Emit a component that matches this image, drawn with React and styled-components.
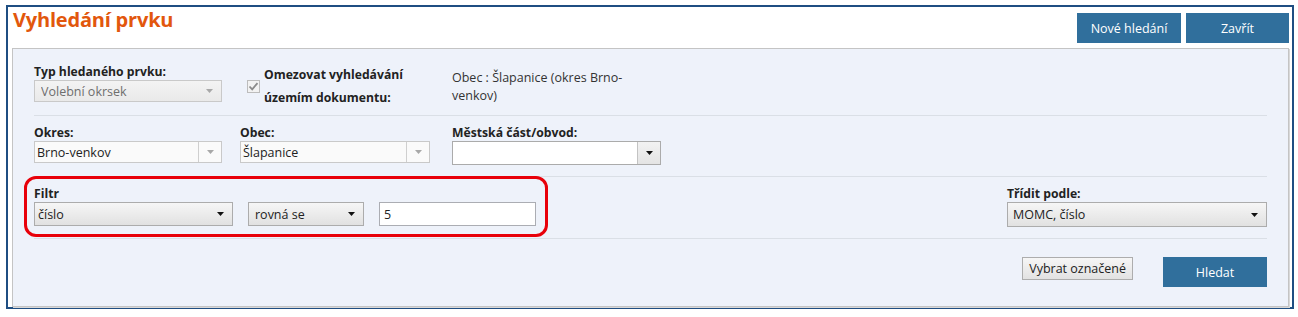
import React from 'react';
import styled, { createGlobalStyle, css } from 'styled-components';

const GlobalStyle = createGlobalStyle`
  body {
    margin: 0;
    background: #fff;
    font-family: "Open Sans", "Noto Sans", sans-serif;
    font-size: 12.5px;
    color: #222;
  }
`;

const Frame = styled.div`
  margin: 5px 4px 0 6px;
  border: 2px solid #1f4e82;
  padding: 0 3px 4px 4px;
  height: 304px;
  box-sizing: border-box;
`;

const Header = styled.div`
  display: flex;
  justify-content: space-between;
  align-items: flex-start;
  padding: 0 0 5px 1px;
`;

const Title = styled.h1`
  margin: 0;
  font-size: 20px;
  line-height: 26px;
  font-weight: 700;
  color: #e2570d;
  letter-spacing: -0.2px;
`;

const ButtonGroup = styled.div`
  display: flex;
  gap: 5px;
  margin-top: 6px;
`;

const BlueButton = styled.button`
  width: ${(p) => p.$w}px;
  height: 30px;
  border: none;
  background: #306f9c;
  color: #fff;
  font-family: inherit;
  font-size: 12.5px;
  padding: 0;
  cursor: pointer;
`;

const GrayButton = styled.button`
  height: 23px;
  padding: 0 6px;
  border: 1px solid #adadad;
  background: linear-gradient(#f6f6f6, #e2e2e2);
  color: #222;
  font-family: inherit;
  font-size: 12.5px;
  cursor: pointer;
`;

const Panel = styled.div`
  background: #eef2fa;
  border: 1px solid #c4c4c4;
  box-shadow: 1px 1px 0 #d8d8d8;
  padding: 0 21px;
  height: 259px;
  box-sizing: border-box;
`;

const Row = styled.div`
  display: flex;
  align-items: flex-start;
  padding: ${(p) => p.$pad};
  border-bottom: ${(p) => (p.$last ? 'none' : '1px solid #dadfe6')};
  justify-content: ${(p) => (p.$end ? 'flex-end' : 'flex-start')};
  gap: ${(p) => p.$gap || 0}px;
`;

const Field = styled.div`
  width: ${(p) => (p.$w ? `${p.$w}px` : 'auto')};
  flex-shrink: 0;
  position: relative;
  margin-left: ${(p) => (p.$push ? 'auto' : '0')};
`;

const Label = styled.div`
  font-weight: 700;
  font-size: 12.2px;
  line-height: 15px;
  margin-bottom: 1px;
  color: #222;
  white-space: nowrap;
`;

const selectLook = {
  disabled: css`
    background: linear-gradient(#f3f3f3, #e9e9e9);
    border-color: #c9c9c9;
    color: #6e6e6e;
    padding-left: 6px;
  `,
  locked: css`
    background: #fafafa;
    border-color: #c9c9c9;
    color: #222;
    padding-left: 2px;
  `,
  combo: css`
    background: #fff;
    border-color: #ababab;
    color: #222;
    padding-left: 2px;
  `,
  drop: css`
    background: linear-gradient(#f6f6f6, #e1e1e1);
    border-color: #acacac;
    color: #222;
    padding-left: ${(p) => p.$pl ?? 5}px;
  `,
};

const Select = styled.div`
  width: ${(p) => p.$w}px;
  height: ${(p) => p.$h || 22}px;
  box-sizing: border-box;
  border: 1px solid;
  display: flex;
  align-items: center;
  ${(p) => selectLook[p.$look]}
`;

const SelectText = styled.span`
  flex: 1;
  white-space: nowrap;
  overflow: hidden;
`;

const ArrowBox = styled.span`
  width: 23px;
  align-self: stretch;
  display: flex;
  align-items: center;
  justify-content: center;
  box-sizing: border-box;
  border-left: ${(p) => (p.$split ? `1px solid ${p.$split}` : 'none')};
  background: ${(p) => p.$bg || 'transparent'};
`;

const TextInput = styled.div`
  width: ${(p) => p.$w}px;
  height: 24px;
  box-sizing: border-box;
  border: 1px solid #abadb3;
  background: #fff;
  padding-left: 4px;
  display: flex;
  align-items: center;
`;

const CheckWrap = styled.div`
  display: flex;
  align-items: center;
  padding-left: 7px;
  gap: 4px;
  margin: -1px 0 -8px;
`;

const CheckLabel = styled.div`
  font-weight: 700;
  font-size: 12.2px;
  line-height: 23px;
  color: #222;
`;

const InfoText = styled.div`
  line-height: 18px;
  margin: 5px 0 -8px;
  color: #333;
`;

const Highlight = styled.div`
  position: absolute;
  left: -10px;
  right: -12px;
  top: -10px;
  bottom: -11px;
  border: 3px solid #e8000a;
  border-radius: 12px;
  pointer-events: none;
`;

const Inline = styled.div`
  display: flex;
  gap: 15px;
`;

const Arrow = ({ color }) => (
  <svg width="7" height="4" viewBox="0 0 7 4">
    <polygon points="0,0 7,0 3.5,4" fill={color} />
  </svg>
);

const Checkbox = () => (
  <svg width="13" height="13" viewBox="0 0 13 13">
    <rect x="0.5" y="0.5" width="12" height="12" fill="#f2f2f2" stroke="#bcbcbc" />
    <path d="M2.5 6.5 L5.2 9.3 L10.5 3.2" fill="none" stroke="#8a8a8a" strokeWidth="1.8" />
  </svg>
);

const App = () => (
  <>
    <GlobalStyle />
    <Frame>
      <Header>
        <Title>Vyhledání prvku</Title>
        <ButtonGroup>
          <BlueButton $w={104}>Nové hledání</BlueButton>
          <BlueButton $w={103}>Zavřít</BlueButton>
        </ButtonGroup>
      </Header>
      <Panel>
        <Row $pad="15px 0 13px">
          <Field $w={206}>
            <Label>Typ hledaného prvku:</Label>
            <Select $w={188} $look="disabled">
              <SelectText>Volební okrsek</SelectText>
              <ArrowBox><Arrow color="#a8a8a8" /></ArrowBox>
            </Select>
          </Field>
          <Field $w={212}>
            <CheckWrap>
              <Checkbox />
              <CheckLabel>
                Omezovat vyhledávání
                <br />
                územím dokumentu:
              </CheckLabel>
            </CheckWrap>
          </Field>
          <Field>
            <InfoText>
              Obec : Šlapanice (okres Brno-
              <br />
              venkov)
            </InfoText>
          </Field>
        </Row>
        <Row $pad="9px 0 11px">
          <Field $w={206}>
            <Label>Okres:</Label>
            <Select $w={188} $look="locked">
              <SelectText>Brno-venkov</SelectText>
              <ArrowBox $split="#cfcfcf"><Arrow color="#a8a8a8" /></ArrowBox>
            </Select>
          </Field>
          <Field $w={212}>
            <Label>Obec:</Label>
            <Select $w={190} $look="locked">
              <SelectText>Šlapanice</SelectText>
              <ArrowBox $split="#cfcfcf"><Arrow color="#a8a8a8" /></ArrowBox>
            </Select>
          </Field>
          <Field>
            <Label>Městská část/obvod:</Label>
            <Select $w={209} $h={24} $look="combo">
              <SelectText />
              <ArrowBox $split="#c3c3c3" $bg="linear-gradient(#f2f2f2, #e4e4e4)">
                <Arrow color="#111" />
              </ArrowBox>
            </Select>
          </Field>
        </Row>
        <Row $pad="9px 0 11px">
          <Field>
            <Label>Filtr</Label>
            <Inline>
              <Select $w={199} $h={24} $look="drop" $pl={3}>
                <SelectText>číslo</SelectText>
                <ArrowBox><Arrow color="#111" /></ArrowBox>
              </Select>
              <Select $w={116} $h={24} $look="drop" $pl={6}>
                <SelectText>rovná se</SelectText>
                <ArrowBox><Arrow color="#111" /></ArrowBox>
              </Select>
              <TextInput $w={157}>5</TextInput>
            </Inline>
            <Highlight />
          </Field>
          <Field $push>
            <Label>Třídit podle:</Label>
            <Inline>
              <Select $w={260} $h={25} $look="drop" $pl={5}>
                <SelectText>MOMC, číslo</SelectText>
                <ArrowBox><Arrow color="#111" /></ArrowBox>
              </Select>
            </Inline>
          </Field>
        </Row>
        <Row $pad="18px 0 0" $end $last $gap={30}>
          <GrayButton>Vybrat označené</GrayButton>
          <BlueButton $w={104}>Hledat</BlueButton>
        </Row>
      </Panel>
    </Frame>
  </>
);

export default App;
